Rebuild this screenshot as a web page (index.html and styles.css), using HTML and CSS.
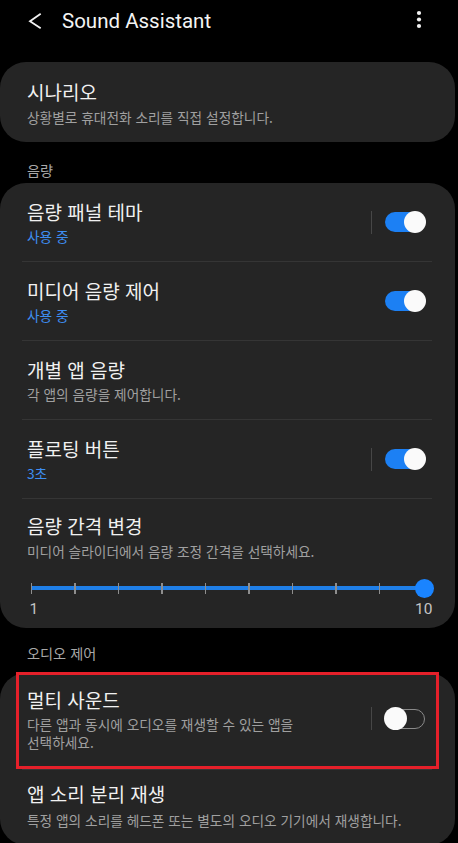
FILE: index.html
```html
<!DOCTYPE html>
<html lang="ko">
<head>
<meta charset="utf-8">
<title>Sound Assistant</title>
<link rel="stylesheet" href="styles.css">
</head>
<body>
<header class="appbar">
  <svg class="back" width="14" height="18" viewBox="0 0 14 18"><path d="M12.7 1.8 L2 9.2 L12.7 16.2" fill="none" stroke="#f2f2f2" stroke-width="1.8" stroke-linejoin="miter"/></svg>
  <h1 class="appbar-title">Sound Assistant</h1>
  <svg class="more" width="8" height="24" viewBox="0 0 8 24"><circle cx="4" cy="4" r="2.1" fill="#f2f2f2"/><circle cx="4" cy="10.5" r="2.1" fill="#f2f2f2"/><circle cx="4" cy="17" r="2.1" fill="#f2f2f2"/></svg>
</header>

<section class="card card--first">
  <div class="row row--single">
    <div class="row-text">
      <div class="title">시나리오</div>
      <div class="sub sub--tight">상황별로 휴대전화 소리를 직접 설정합니다.</div>
    </div>
  </div>
</section>

<div class="section-label section-label--volume">음량</div>

<section class="card">
  <div class="row">
    <div class="row-text">
      <div class="title">음량 패널 테마</div>
      <div class="sub sub--blue">사용 중</div>
    </div>
    <div class="switch-area">
      <span class="vline"></span>
      <span class="switch switch--on"><span class="knob"></span></span>
    </div>
  </div>
  <div class="divider"></div>
  <div class="row">
    <div class="row-text">
      <div class="title">미디어 음량 제어</div>
      <div class="sub sub--blue">사용 중</div>
    </div>
    <div class="switch-area">
      <span class="vline vline--none"></span>
      <span class="switch switch--on"><span class="knob"></span></span>
    </div>
  </div>
  <div class="divider"></div>
  <div class="row">
    <div class="row-text">
      <div class="title">개별 앱 음량</div>
      <div class="sub">각 앱의 음량을 제어합니다.</div>
    </div>
  </div>
  <div class="divider"></div>
  <div class="row">
    <div class="row-text">
      <div class="title">플로팅 버튼</div>
      <div class="sub sub--blue">3초</div>
    </div>
    <div class="switch-area">
      <span class="vline"></span>
      <span class="switch switch--on"><span class="knob"></span></span>
    </div>
  </div>
  <div class="divider"></div>
  <div class="row row--slider">
    <div class="title">음량 간격 변경</div>
    <div class="sub">미디어 슬라이더에서 음량 조정 간격을 선택하세요.</div>
    <div class="slider">
      <span class="tick"></span><span class="tick"></span><span class="tick"></span><span class="tick"></span><span class="tick"></span>
      <span class="tick"></span><span class="tick"></span><span class="tick"></span><span class="tick"></span><span class="tick"></span>
      <span class="slider-thumb"></span>
    </div>
    <div class="slider-labels"><span>1</span><span>10</span></div>
  </div>
</section>

<div class="section-label section-label--audio">오디오 제어</div>

<section class="card">
  <div class="row row--multi">
    <div class="row-text">
      <div class="title">멀티 사운드</div>
      <div class="sub sub--multi">다른 앱과 동시에 오디오를 재생할 수 있는 앱을 선택하세요.</div>
    </div>
    <div class="switch-area">
      <span class="vline"></span>
      <span class="switch switch--off"><span class="knob"></span></span>
    </div>
    <div class="highlight"></div>
  </div>
  <div class="divider"></div>
  <div class="row row--last">
    <div class="row-text">
      <div class="title">앱 소리 분리 재생</div>
      <div class="sub sub--last">특정 앱의 소리를 헤드폰 또는 별도의 오디오 기기에서 재생합니다.</div>
    </div>
  </div>
</section>
</body>
</html>
```

FILE: styles.css
```css
html, body {
  margin: 0;
  padding: 0;
  background: #000;
}

body {
  font-family: "Noto Sans CJK KR", "Noto Sans", sans-serif;
  color: #f1f1f1;
  overflow: hidden;
}

.appbar {
  height: 41px;
  display: flex;
  align-items: center;
  padding: 0 35px 0 28px;
}

.back {
  display: block;
  flex: none;
}

.appbar-title {
  margin: 0 0 0 20px;
  font-family: Roboto, "Noto Sans", sans-serif;
  font-weight: 400;
  font-size: 20.5px;
  line-height: 24px;
  color: #f4f4f4;
}

.more {
  display: block;
  margin-left: auto;
  flex: none;
}

.card {
  background: #252525;
  border-radius: 26px;
  margin-right: 3px;
}

.card--first {
  margin-top: 21px;
}

.row {
  position: relative;
  display: flex;
  align-items: center;
  padding: 15.5px 30px 15px 27px;
}

.row-text {
  flex: 1;
  min-width: 0;
}

.title {
  font-size: 19px;
  line-height: 26px;
  color: #f1f1f1;
}

.sub {
  margin-top: 1.5px;
  font-size: 13.7px;
  line-height: 20px;
  color: #a0a0a0;
  word-break: keep-all;
}

.sub--blue {
  color: #3e8ef2;
}

.row--single {
  padding: 17px 30px 15px 27px;
}

.sub--tight {
  margin-top: 2px;
}

.divider {
  height: 1px;
  background: #353535;
  margin: 0 23px 0 22px;
}

.section-label {
  padding-left: 27px;
  font-size: 14.2px;
  line-height: 20px;
  color: #a8a8a8;
}

.section-label--volume {
  margin: 18px 0 3px;
}

.section-label--audio {
  margin: 15px 0 10px;
}

/* switches */
.switch-area {
  flex: none;
  display: flex;
  align-items: center;
  gap: 13px;
  margin-left: 20px;
}

.vline {
  width: 1px;
  height: 23px;
  background: #474747;
}

.vline--none {
  background: transparent;
}

.switch {
  box-sizing: border-box;
  width: 40px;
  height: 20px;
  border-radius: 10px;
  display: flex;
  align-items: center;
}

.switch--on {
  background: #1c80f4;
  justify-content: flex-end;
}

.switch--off {
  border: 1.5px solid #8a8a8a;
  justify-content: flex-start;
}

.knob {
  width: 22px;
  height: 22px;
  border-radius: 50%;
  background: #fafafa;
  flex: none;
}

.switch--on .knob {
  margin-right: -1px;
}

.switch--off .knob {
  width: 23px;
  height: 23px;
  margin-left: -2.5px;
}

/* slider row */
.row--slider {
  display: block;
  padding: 14px 0 10.5px;
}

.row--slider .title,
.row--slider .sub {
  padding-left: 27px;
}

.slider {
  position: relative;
  display: flex;
  justify-content: space-between;
  align-items: center;
  height: 20px;
  margin: 17.5px 31px 0 30.5px;
  background: linear-gradient(#1f7fe8, #1f7fe8) center / 100% 4px no-repeat;
}

.tick {
  width: 1.5px;
  height: 11px;
  background: #8e8e8e;
}

.slider-thumb {
  position: absolute;
  right: -9.5px;
  top: 0.5px;
  width: 19px;
  height: 19px;
  border-radius: 50%;
  background: #1a84ff;
}

.slider-labels {
  display: flex;
  justify-content: space-between;
  margin: 1.5px 22.5px 0 29.5px;
  font-family: Roboto, "Noto Sans", sans-serif;
  font-size: 15.5px;
  line-height: 18px;
  color: #c4c4c4;
}

/* audio card */
.row--multi {
  padding: 13.5px 30px 17.8px 27px;
}

.sub--multi {
  margin-top: 2.7px;
  line-height: 18px;
}

.highlight {
  position: absolute;
  left: 16px;
  top: -1px;
  width: 423px;
  height: 97px;
  box-sizing: border-box;
  border: 3px solid #e5202a;
  pointer-events: none;
}

.row--last {
  padding: 11.5px 30px 15px 27px;
}

.sub--last {
  margin-top: 2.2px;
}
```
